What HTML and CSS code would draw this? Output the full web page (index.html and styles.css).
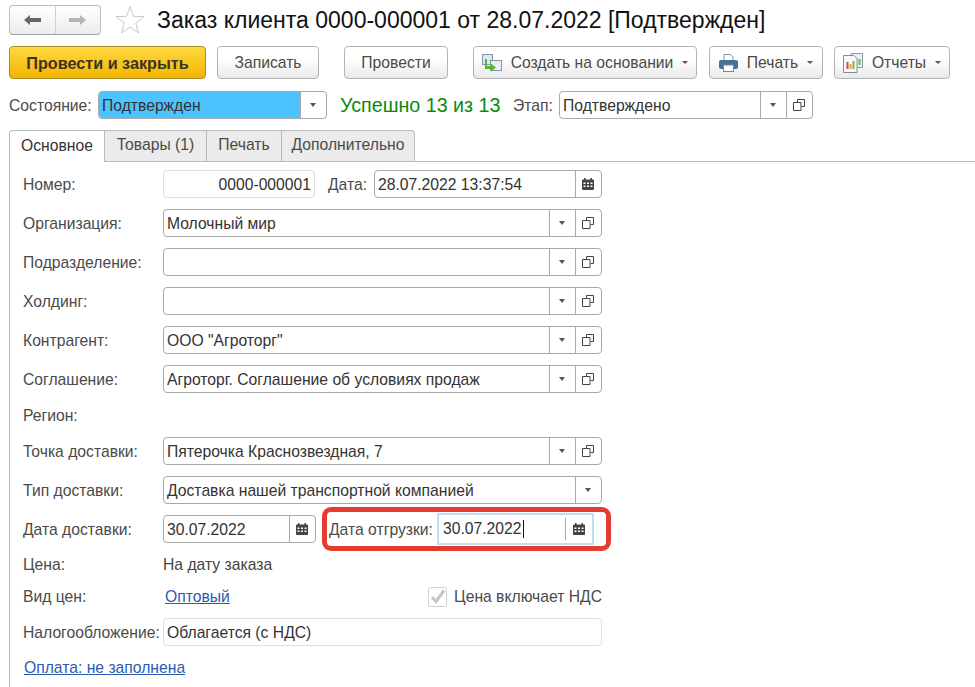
FILE: index.html
```html
<!DOCTYPE html>
<html lang="ru">
<head>
<meta charset="utf-8">
<title>Заказ клиента</title>
<link rel="stylesheet" href="styles.css">
</head>
<body>
<svg class="defs" width="0" height="0" aria-hidden="true">
  <defs>
    <symbol id="i-open" viewBox="0 0 12 12"><path d="M4.500 3V.5h7v7H8.500M.5 3.500h7.500v8H.5z" fill="none" stroke="#444"/></symbol>
    <symbol id="i-cal" viewBox="0 0 12 12"><path fill="#444" d="M2 0h1.500v1.500h5V0H10v1.500h1a1 1 0 0 1 1 1V11a1 1 0 0 1-1 1H1a1 1 0 0 1-1-1V2.500a1 1 0 0 1 1-1h1z"/><path fill="#fff" d="M1.500 4.500h2V6h-2zM5 4.500h2V6H5zM8.500 4.500h2V6h-2zM1.500 7.500h2V9h-2zM5 7.500h2V9H5zM8.500 7.500h2V9h-2z"/></symbol>
  </defs>
</svg>
<div class="page">
  <header class="titlebar">
    <div class="nav">
      <span class="nav-btn"><svg width="17" height="10" viewBox="0 0 17 10"><path fill="#666" d="M0 5l6-5v3h11v4H6v3z"/></svg></span>
      <span class="nav-btn"><svg width="17" height="10" viewBox="0 0 17 10"><path fill="#b4b4b4" d="M17 5l-6-5v3H0v4h11v3z"/></svg></span>
    </div>
    <svg class="star" width="30" height="30" viewBox="0 0 30 30"><path d="M15 1.500l3.500 9.800 10.400.3-8.200 6.400 2.900 10-8.600-5.900-8.600 5.900 2.900-10-8.200-6.400 10.400-.3z" fill="#fff" stroke="#c4c8cf"/></svg>
    <h1 class="title">Заказ клиента 0000-000001 от 28.07.2022 [Подтвержден]</h1>
  </header>

  <div class="toolbar">
    <button class="btn btn-primary">Провести и закрыть</button>
    <button class="btn btn-write">Записать</button>
    <button class="btn btn-post">Провести</button>
    <button class="btn btn-create">
      <svg class="btn-icon" width="20" height="18" viewBox="0 0 20 18"><rect x=".5" y=".5" width="10" height="10" fill="#dbe6ef" stroke="#7f97ad"/><rect x="8.500" y="6.500" width="11" height="10" fill="#e8eff5" stroke="#7f97ad"/><path d="M5 5v7h4V9.500l5 4-5 4V15H3V5z" fill="#5cb531"/></svg>
      Создать на основании<span class="caret caret-btn"></span>
    </button>
    <button class="btn btn-print">
      <svg class="btn-icon" width="19" height="18" viewBox="0 0 19 18"><path d="M5 .5h6.500L14 3v5H5z" fill="#fff" stroke="#7d95ad"/><rect x="0" y="6" width="19" height="9" rx="2" fill="#4a7199"/><rect x="4.500" y="11" width="10" height="6.500" fill="#fff" stroke="#6d8aa6"/></svg>
      Печать<span class="caret caret-btn"></span>
    </button>
    <button class="btn btn-reports">
      <svg class="btn-icon" width="20" height="20" viewBox="0 0 20 20"><path d="M8 .5h11.500v14H8z" fill="#eef1f4" stroke="#8b98a5"/><path d="M.5 2.500H11l3 3v14H.5z" fill="#f8f8f8" stroke="#7e8c99"/><rect x="3.500" y="9" width="2" height="7" fill="#e0453a"/><rect x="6.500" y="11" width="2" height="5" fill="#e8a33a"/><rect x="9.500" y="8" width="2" height="8" fill="#6cbb45"/><rect x="15.500" y="6" width="2" height="6" fill="#6cbb45"/></svg>
      Отчеты<span class="caret caret-btn"></span>
    </button>
  </div>

  <div class="statusbar">
    <span class="lbl lbl-state">Состояние:</span>
    <div class="field field-state">
      <span class="val val-blue">Подтвержден</span>
      <span class="fbtn"><span class="caret"></span></span>
    </div>
    <span class="success">Успешно 13 из 13</span>
    <span class="lbl lbl-stage">Этап:</span>
    <div class="field field-stage">
      <span class="val">Подтверждено</span>
      <span class="fbtn"><span class="caret"></span></span>
      <span class="fbtn"><svg class="ico"><use href="#i-open"/></svg></span>
    </div>
  </div>

  <nav class="tabs">
    <span class="tab tab-active">Основное</span>
    <span class="tab tab-goods">Товары (1)</span>
    <span class="tab tab-print">Печать</span>
    <span class="tab tab-extra">Дополнительно</span>
  </nav>

  <main class="panel">
    <div class="row">
      <span class="lbl lbl-form">Номер:</span>
      <div class="field field-ro field-num"><span class="val val-right">0000-000001</span></div>
      <span class="lbl lbl-date">Дата:</span>
      <div class="field field-grow">
        <span class="val">28.07.2022 13:37:54</span>
        <span class="fbtn"><svg class="ico"><use href="#i-cal"/></svg></span>
      </div>
    </div>
    <div class="row">
      <span class="lbl lbl-form">Организация:</span>
      <div class="field field-grow"><span class="val">Молочный мир</span><span class="fbtn"><span class="caret"></span></span><span class="fbtn"><svg class="ico"><use href="#i-open"/></svg></span></div>
    </div>
    <div class="row">
      <span class="lbl lbl-form">Подразделение:</span>
      <div class="field field-grow"><span class="val"></span><span class="fbtn"><span class="caret"></span></span><span class="fbtn"><svg class="ico"><use href="#i-open"/></svg></span></div>
    </div>
    <div class="row">
      <span class="lbl lbl-form">Холдинг:</span>
      <div class="field field-grow"><span class="val"></span><span class="fbtn"><span class="caret"></span></span><span class="fbtn"><svg class="ico"><use href="#i-open"/></svg></span></div>
    </div>
    <div class="row">
      <span class="lbl lbl-form">Контрагент:</span>
      <div class="field field-grow"><span class="val">ООО "Агроторг"</span><span class="fbtn"><span class="caret"></span></span><span class="fbtn"><svg class="ico"><use href="#i-open"/></svg></span></div>
    </div>
    <div class="row">
      <span class="lbl lbl-form">Соглашение:</span>
      <div class="field field-grow"><span class="val">Агроторг. Соглашение об условиях продаж</span><span class="fbtn"><span class="caret"></span></span><span class="fbtn"><svg class="ico"><use href="#i-open"/></svg></span></div>
    </div>
    <div class="row row-text row-region">
      <span class="lbl lbl-form">Регион:</span>
    </div>
    <div class="row">
      <span class="lbl lbl-form">Точка доставки:</span>
      <div class="field field-grow"><span class="val">Пятерочка Краснозвездная, 7</span><span class="fbtn"><span class="caret"></span></span><span class="fbtn"><svg class="ico"><use href="#i-open"/></svg></span></div>
    </div>
    <div class="row">
      <span class="lbl lbl-form">Тип доставки:</span>
      <div class="field field-grow"><span class="val">Доставка нашей транспортной компанией</span><span class="fbtn"><span class="caret"></span></span></div>
    </div>
    <div class="row">
      <span class="lbl lbl-form">Дата доставки:</span>
      <div class="field field-delivery"><span class="val">30.07.2022</span><span class="fbtn"><svg class="ico"><use href="#i-cal"/></svg></span></div>
      <div class="callout">
        <span class="lbl lbl-ship">Дата отгрузки:</span>
        <div class="field field-focus"><span class="val val-caret">30.07.2022</span><span class="fbtn fbtn-focus"><svg class="ico"><use href="#i-cal"/></svg></span></div>
      </div>
    </div>
    <div class="row row-text row-price">
      <span class="lbl lbl-form lbl-flat">Цена:</span>
      <span class="plain">На дату заказа</span>
    </div>
    <div class="row row-text row-kind">
      <span class="lbl lbl-form lbl-flat">Вид цен:</span>
      <a class="link link-kind" href="#">Оптовый</a>
      <span class="check">
        <svg width="19" height="20" viewBox="0 0 19 20"><rect x=".5" y=".5" width="18" height="19" rx="2" fill="#fff" stroke="#d0d0d0"/><path d="M4 10l4 4.500L16 3.500" fill="none" stroke="#c6c6c6" stroke-width="3"/></svg>
        <span class="check-text">Цена включает НДС</span>
      </span>
    </div>
    <div class="row row-tax">
      <span class="lbl lbl-form">Налогообложение:</span>
      <div class="field field-ro field-grow"><span class="val">Облагается (с НДС)</span></div>
    </div>
    <a class="link link-pay" href="#">Оплата: не заполнена</a>
  </main>
</div>
</body>
</html>
```

FILE: styles.css
```css
* { box-sizing: border-box; }
html, body { margin: 0; height: 100%; overflow: hidden; background: #fff; }
body { font: 15.7px/18px "Liberation Sans", Arial, sans-serif; color: #4a4a4a; }
.defs { position: absolute; }
.page { display: flex; flex-direction: column; height: 687px; padding-top: 5px; }

.titlebar { display: flex; align-items: center; height: 30px; padding-left: 9px; }
.nav { display: flex; width: 92px; height: 30px; border: 1px solid #bdbdbd; border-bottom-color: #a0a0a0; border-radius: 4px; background: linear-gradient(#fff, #ececec); }
.nav-btn { flex: 1; display: flex; align-items: center; justify-content: center; }
.nav-btn + .nav-btn { border-left: 1px solid #d0d0d0; }
.star { margin-left: 14px; }
.title { margin: 0 0 0 12px; font-size: 23px; font-weight: 400; line-height: 30px; color: #111; white-space: nowrap; }

.toolbar { display: flex; height: 33px; margin-top: 11px; padding-left: 9px; }
.btn { display: flex; align-items: center; justify-content: center; height: 33px; padding: 0; border: 1px solid #b4b4b4; border-radius: 4px; background: linear-gradient(#fff 40%, #e9e9e9); font: inherit; color: #4a4a4a; white-space: nowrap; }
.btn-primary { width: 197px; font-weight: 700; font-size: 16.2px; color: #3c3320; border-color: #a88a2a; background: linear-gradient(#ffd83f, #f2b600); }
.btn-write { width: 102px; margin-left: 11px; }
.btn-post { width: 104px; margin-left: 25px; }
.btn-create { width: 224px; margin-left: 25px; }
.btn-print { width: 114px; margin-left: 12px; }
.btn-reports { width: 116px; margin-left: 11px; }
.btn-icon { margin-right: 9px; flex: none; }

.caret { display: inline-block; width: 0; height: 0; border-left: 3px solid transparent; border-right: 3px solid transparent; border-top: 4px solid #555; }
.caret-btn { margin-left: 9px; border-top-width: 3px; }

.statusbar { display: flex; align-items: center; height: 28px; margin-top: 12px; padding-left: 9px; }
.lbl { white-space: nowrap; }
.lbl-state { width: 89px; padding-top: 1px; }
.lbl-stage { width: 46px; margin-left: 13px; padding-top: 1px; }
.success { margin-left: 13px; font-size: 19.700px; color: #0a8a0a; white-space: nowrap; width: 160px; }

.field { display: flex; height: 28px; border: 1px solid #a9a9a9; border-radius: 4px; background: #fff; overflow: hidden; color: #333; }
.val { flex: 1; min-width: 0; padding: 1px 3px 0; line-height: 26px; white-space: nowrap; overflow: hidden; }
.val-right { text-align: right; }
.val-blue { background: #4dc3ff; }
.fbtn { flex: none; display: flex; align-items: center; justify-content: center; width: 26px; padding-right: 1px; border-left: 1px solid #a9a9a9; }
.ico { width: 12px; height: 12px; }
.field-state { width: 229px; }
.field-stage { width: 254px; }

.tabs { display: flex; height: 31px; margin-top: 11px; padding-left: 9px; }
.tab { display: flex; align-items: center; justify-content: center; height: 31px; padding-bottom: 2px; border: 1px solid #b9b9b9; border-left-width: 0; background: #ebebeb; white-space: nowrap; border-bottom: 0; }
.tab-active { width: 96px; border-left-width: 1px; background: #fff; border-radius: 4px 0 0 0; position: relative; z-index: 1; height: 32px; color: #333; }
.tab-goods { width: 102px; }
.tab-print { width: 75px; }
.tab-extra { width: 133px; border-radius: 0 4px 0 0; }

.panel { flex: 1; margin-left: 9px; padding: 8px 0 0 13px; border-left: 1px solid #b9b9b9; border-top: 1px solid #b9b9b9; }
.row { display: flex; align-items: center; width: 579px; height: 28px; margin-bottom: 11px; }
.lbl-form { width: 140px; flex: none; padding-top: 1px; }
.lbl-flat { padding-top: 0; }
.lbl-date { width: 46px; margin-left: 13px; padding-top: 1px; }
.field-ro { border-color: #dedede; }
.field-num { width: 152px; }
.field-grow { flex: 1; }
.field-delivery { width: 153px; flex: none; }

.row-text { height: 22px; }
.row-region { margin-bottom: 11px; }
.row-price { margin: 10px 0 10px; }
.row-kind { margin-bottom: 10px; }
.plain { color: #444; }
.link { color: #2a5cb0; text-decoration: underline; white-space: nowrap; }
.link-kind { margin-left: 2px; }
.check { display: flex; align-items: center; margin-left: auto; }
.check-text { margin-left: 7px; }
.link-pay { display: inline-block; margin-left: 1px; margin-top: 2px; }

.callout { display: flex; align-items: center; flex: none; width: 289px; height: 44px; margin: 0 0 0 6px; padding-left: 2px; border: 5px solid #e53c32; border-radius: 9px; background: #fff; }
.lbl-ship { width: 108px; flex: none; padding-top: 1px; }
.field-focus { width: 157px; height: 32px; border: 2px solid #c2def5; border-radius: 0; }
.val-caret { flex: none; width: 126px; padding-left: 4px; line-height: 28px; padding-top: 0; }
.val-caret::after { content: ""; display: inline-block; width: 1px; height: 18px; margin-left: 1px; background: #111; vertical-align: -4px; }
.fbtn-focus { flex: 1; margin: 3px 0; border-left-color: #a9a9a9; }
```
